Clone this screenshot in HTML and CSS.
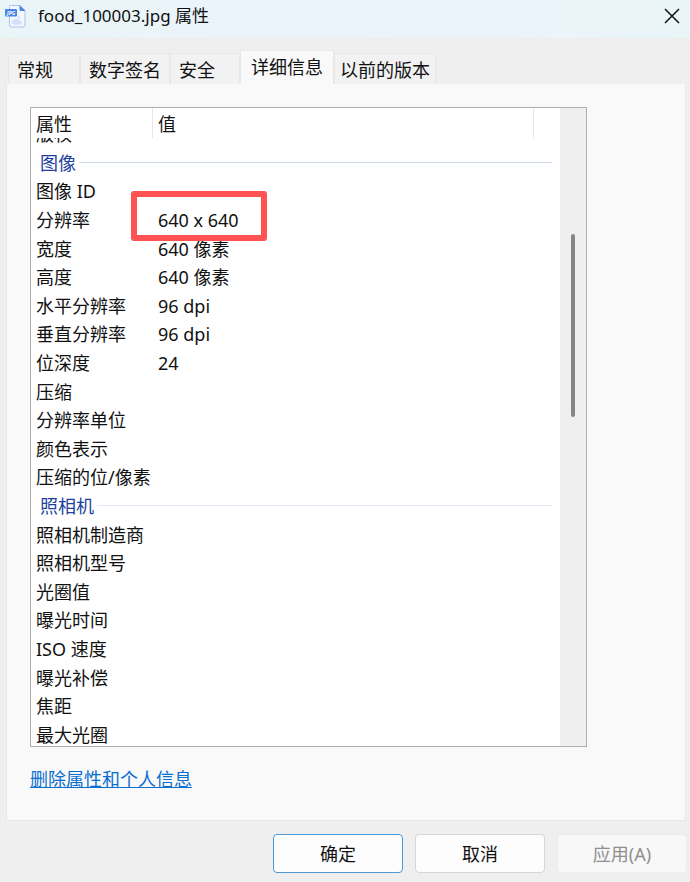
FILE: index.html
```html
<!DOCTYPE html>
<html lang="zh-CN">
<head>
  <meta charset="UTF-8">
  <meta name="viewport" content="width=device-width, initial-scale=1.0">
  <title>food_100003.jpg 属性</title>
  <link rel="stylesheet" href="styles.css">
</head>
<body>
  <header class="titlebar">
    <svg class="file-icon" width="21" height="23" viewBox="0 0 21 23" aria-hidden="true">
      <path d="M5.500 .5h9.500l5 5v14.500a2 2 0 0 1-2 2H6.500a2 2 0 0 1-2-2V1.500a1 1 0 0 1 1-1z" fill="#f3f7fe" stroke="#a9c3f3"/>
      <path d="M14.500 0l6 6h-4.500a1.500 1.500 0 0 1-1.500-1.500z" fill="#4b82e3"/>
      <path d="M8 19.500a2.500 2.500 0 0 1 .5-4.500 3 3 0 0 1 4.500-.5 3 3 0 0 1 3 2 1.800 1.800 0 0 1 .5 3z" fill="#d3e0f8"/>
      <circle cx="14" cy="12.500" r="1.300" fill="#d3e0f8"/>
      <rect x="0" y="4" width="12" height="7.500" rx="1" fill="#4b86e6"/>
      <text class="file-icon-label" x="2" y="10">JPG</text>
    </svg>
    <h1>food_100003.jpg 属性</h1>
    <button type="button" class="close" aria-label="关闭">
      <svg width="16" height="16" viewBox="0 0 16 16">
        <path d="M1 1l14 14M15 1L1 15" stroke="#111" stroke-width="1.500" fill="none"/>
      </svg>
    </button>
  </header>

  <main class="content">
    <!-- Tabs -->
    <nav class="tabs" role="tablist">
      <button type="button" class="tab" role="tab">常规</button>
      <button type="button" class="tab" role="tab">数字签名</button>
      <button type="button" class="tab" role="tab">安全</button>
      <button type="button" class="tab tab-active" role="tab" aria-selected="true">详细信息</button>
      <button type="button" class="tab tab-long" role="tab">以前的版本</button>
    </nav>

    <section class="panel">
      <div class="list">
        <table class="props">
          <thead>
            <tr><th>属性</th><th>值</th><th></th></tr>
          </thead>
          <tbody>
            <tr><td>版权</td><td></td></tr>
            <tr class="group"><th colspan="2">图像</th></tr>
            <tr><td>图像 ID</td><td></td></tr>
            <tr><td>分辨率</td><td class="marked">640 x 640</td></tr>
            <tr><td>宽度</td><td>640 像素</td></tr>
            <tr><td>高度</td><td>640 像素</td></tr>
            <tr><td>水平分辨率</td><td>96 dpi</td></tr>
            <tr><td>垂直分辨率</td><td>96 dpi</td></tr>
            <tr><td>位深度</td><td>24</td></tr>
            <tr><td>压缩</td><td></td></tr>
            <tr><td>分辨率单位</td><td></td></tr>
            <tr><td>颜色表示</td><td></td></tr>
            <tr><td>压缩的位/像素</td><td></td></tr>
            <tr class="group group-light"><th colspan="2">照相机</th></tr>
            <tr><td>照相机制造商</td><td></td></tr>
            <tr><td>照相机型号</td><td></td></tr>
            <tr><td>光圈值</td><td></td></tr>
            <tr><td>曝光时间</td><td></td></tr>
            <tr><td>ISO 速度</td><td></td></tr>
            <tr><td>曝光补偿</td><td></td></tr>
            <tr><td>焦距</td><td></td></tr>
            <tr><td>最大光圈</td><td></td></tr>
          </tbody>
        </table>
        <div class="scrollbar"><div class="thumb"></div></div>
      </div>
      <a class="remove-link" href="#">删除属性和个人信息</a>
    </section>
  </main>

  <footer class="actions">
    <button type="button" class="btn btn-default">确定</button>
    <button type="button" class="btn">取消</button>
    <button type="button" class="btn" disabled>应用(A)</button>
  </footer>
</body>
</html>
```
FILE: styles.css
```css
:root {
  --window-bg: #efefef;
  --panel-bg: #f9f9f9;
  --line: #e8e8e8;
  --list-border: #abadb3;
  --text-color: #111;
  --group-color: #1e3f9f;
  --mark-color: #ff5252;
}

*,
*::before,
*::after {
  margin: 0;
  padding: 0;
  box-sizing: border-box;
}

body {
  font-family: "Noto Sans", "Noto Sans CJK SC", sans-serif;
  font-size: 18px;
  line-height: 26px;
  color: var(--text-color);
  background-color: var(--window-bg);
  height: 100vh;
  display: flex;
  flex-direction: column;
}

button {
  font: inherit;
  color: inherit;
}

/* Title bar */
.titlebar {
  display: flex;
  align-items: center;
  height: 38px;
  padding: 0 10px 6px 5px;
  background: linear-gradient(90deg, #eaf5f8, #ebf3fb 55%, #eaf5f8);
}

.titlebar h1 {
  flex: 1;
  margin-left: 12px;
  font-size: 17px;
  font-weight: 400;
}

.file-icon-label {
  font: italic 700 5px "Open Sans", sans-serif;
  fill: #fff;
}

.close {
  display: flex;
  border: none;
  background: none;
}

.content {
  flex: 1;
  min-height: 0;
  display: flex;
  flex-direction: column;
  padding: 12px 4px 0 6px;
}

/* Tabs */
.tabs {
  display: flex;
  align-items: flex-end;
  padding-left: 2px;
}

.tab {
  min-width: 72px;
  height: 31px;
  padding: 2px 8px 0;
  text-align: left;
  white-space: nowrap;
  background-color: #f2f2f2;
  border: 1px solid var(--line);
  border-bottom: none;
}

.tab + .tab {
  min-width: 70px;
}

.tab-active {
  height: 34px;
  padding: 0 10px 2px;
  background-color: var(--panel-bg);
}

.tab-long {
  padding: 2px 5px 0;
}

.panel {
  flex: 1;
  min-height: 0;
  display: flex;
  flex-direction: column;
  align-items: flex-start;
  padding: 23px 98px 28px 23px;
  background-color: var(--panel-bg);
  border: 1px solid var(--line);
  border-top: none;
}

/* Property list */
.list {
  flex: 1;
  min-height: 0;
  width: 100%;
  display: flex;
  border: 1px solid var(--list-border);
  background-color: #fff;
}

.props {
  flex: 1;
  display: flex;
  flex-direction: column;
  overflow: hidden;
}

.props th,
.props td {
  font-weight: 400;
  text-align: left;
  white-space: nowrap;
}

.props tr {
  display: grid;
  grid-template-columns: 122px 1fr;
  align-items: center;
}

.props thead {
  display: block;
  position: relative;
  z-index: 1;
  background-color: #fff;
}

.props thead tr {
  grid-template-columns: 122px 1fr 26px;
}

.props thead th {
  height: 30px;
  padding: 3px 5px 1px;
  border-right: 1px solid var(--line);
}

.props thead th:last-child {
  border-right: none;
}

/* the list is scrolled, so the first row is partly under the header */
.props tbody {
  flex: 1;
  min-height: 0;
  display: grid;
  grid-auto-rows: 1fr;
  margin: -18px 0 -3px;
}

.props td {
  padding-left: 5px;
}

.props .group {
  grid-template-columns: 1fr;
}

.group th {
  display: flex;
  align-items: center;
  gap: 3px;
  padding: 0 8px 0 9px;
  color: var(--group-color);
}

.group th::after {
  content: '';
  flex: 1;
  height: 1px;
  background-color: #ccd6ec;
}

.group-light th::after {
  background-color: #e2e8f5;
}

.marked {
  position: relative;
}

.marked::after {
  content: '';
  position: absolute;
  top: -16px;
  left: -22px;
  width: 136px;
  height: 50px;
  border: 6px solid var(--mark-color);
  border-radius: 3px;
}

.scrollbar {
  display: flex;
  justify-content: center;
  width: 26px;
  background-color: var(--window-bg);
}

.thumb {
  width: 4px;
  height: 183px;
  margin-top: 126px;
  border-radius: 2px;
  background-color: #858585;
}

.remove-link {
  margin-top: 19px;
  color: #0a6fd0;
}

/* Bottom buttons */
.actions {
  display: flex;
  justify-content: flex-end;
  gap: 12px;
  padding: 13px 3px 9px;
}

.btn {
  width: 130px;
  height: 39px;
  border: 1px solid #d6d6d6;
  border-radius: 4px;
  background-color: #fdfdfd;
}

.btn-default {
  border-color: #4a9ad9;
}

.btn:disabled {
  color: #8f8f8f;
  border-color: #ececec;
  background-color: #f8f8f8;
}
```
